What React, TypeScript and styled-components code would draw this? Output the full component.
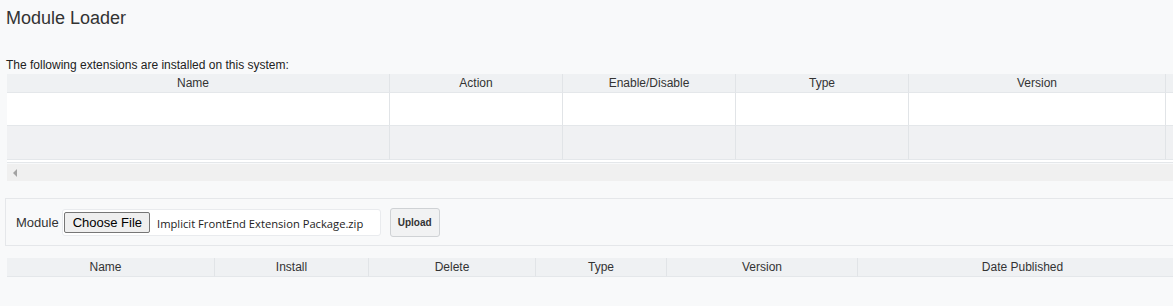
import React from "react";
import styled, { createGlobalStyle } from "styled-components";

const GlobalStyle = createGlobalStyle`
  html, body {
    margin: 0;
    padding: 0;
    background: #f8f9fa;
    overflow: hidden;
  }
  body {
    font-family: "Liberation Sans", Arial, sans-serif;
    color: #333;
  }
`;

const Page = styled.div`
  width: 1173px;
  height: 306px;
  overflow: hidden;
  padding: 0 0 0 5px;
  box-sizing: border-box;
`;

const Title = styled.h1`
  margin: 0;
  padding: 8px 0 0 1px;
  font-size: 18px;
  font-weight: normal;
  line-height: 20px;
  color: #333;
`;

const Caption = styled.p`
  margin: 0;
  padding: 30px 0 0 1px;
  font-size: 12px;
  line-height: 14px;
  color: #222;
`;

const Scroller = styled.div`
  margin: 2px 0 0 2px;
  width: 1180px;
  overflow: hidden;
`;

const Grid = styled.div<{ $cols: string }>`
  display: grid;
  grid-template-columns: ${(p) => p.$cols};
`;

const HeadCell = styled.div<{ $first?: boolean }>`
  height: 19px;
  line-height: 19px;
  font-size: 12px;
  text-align: center;
  background: #eff1f3;
  color: #333;
  padding-right: ${(p) => (p.$first ? "10px" : "0")};
  border-left: ${(p) => (p.$first ? "none" : "1px solid #e1e4e7")};
  border-bottom: 1px solid #e4e7ea;
  box-sizing: border-box;
`;

const BodyCell = styled.div<{ $odd?: boolean; $first?: boolean }>`
  height: ${(p) => (p.$odd ? "34px" : "33px")};
  background: ${(p) => (p.$odd ? "#f0f1f3" : "#ffffff")};
  border-left: ${(p) => (p.$first ? "none" : "1px solid #e1e4e7")};
  border-bottom: 1px solid #e4e7ea;
  box-sizing: border-box;
`;

const TableEnd = styled.div`
  height: 2px;
  border-bottom: 1px solid #e4e7ea;
  background: #ffffff;
`;

const ScrollTrack = styled.div`
  height: 17px;
  margin-top: 1px;
  background: #f0f0f0;
  display: flex;
  align-items: center;
  padding-left: 6px;
`;

const Arrow = styled.span`
  width: 0;
  height: 0;
  border-top: 4px solid transparent;
  border-bottom: 4px solid transparent;
  border-right: 4px solid #a3a3a3;
`;

const UploadPanel = styled.form`
  margin-top: 17px;
  width: 1180px;
  height: 48px;
  border: 1px solid #e5e7ea;
  box-sizing: border-box;
  display: flex;
  align-items: center;
  padding-left: 10px;
`;

const Label = styled.span`
  font-size: 13px;
  color: #333;
  margin-right: 3px;
`;

const FileBox = styled.div`
  width: 319px;
  height: 27px;
  background: #fff;
  border: 1px solid #e9ebee;
  border-radius: 3px;
  box-sizing: border-box;
  display: flex;
  align-items: center;
  padding-left: 1px;
`;

const ChooseButton = styled.span`
  height: 21px;
  padding: 0 7px 0 8px;
  box-sizing: border-box;
  border: 1px solid #767676;
  border-radius: 2px;
  background: #efefef;
  font-size: 13px;
  line-height: 19px;
  color: #000;
`;

const FileName = styled.span`
  margin-left: 7px;
  font-family: "Open Sans", sans-serif;
  font-size: 11.2px;
  color: #222;
  padding-top: 3px;
  white-space: nowrap;
`;

const UploadButton = styled.button`
  margin-left: 9px;
  width: 50px;
  height: 29px;
  border: 1px solid #cfd2d5;
  border-radius: 3px;
  background: #f1f2f3;
  font-family: "Liberation Sans", Arial, sans-serif;
  font-size: 10px;
  font-weight: bold;
  color: #333;
  padding: 0;
`;

const LowerTable = styled.div`
  margin: 12px 0 0 2px;
  width: 1180px;
`;

const upperCols = "382px 173px 173px 173px 257px 22px";
const upperHeads = ["Name", "Action", "Enable/Disable", "Type", "Version", ""];
const lowerCols = "207px 154px 167px 131px 191px 330px";
const lowerHeads = ["Name", "Install", "Delete", "Type", "Version", "Date Published"];

export default function App() {
  return (
    <Page>
      <GlobalStyle />
      <Title>Module Loader</Title>
      <Caption>The following extensions are installed on this system:</Caption>
      <Scroller>
        <Grid $cols={upperCols}>
          {upperHeads.map((h, i) => (
            <HeadCell key={"h" + i} $first={i === 0}>
              {h}
            </HeadCell>
          ))}
          {[0, 1].map((r) =>
            upperHeads.map((_, i) => (
              <BodyCell key={r + "-" + i} $odd={r === 1} $first={i === 0} />
            ))
          )}
        </Grid>
        <TableEnd />
        <ScrollTrack>
          <Arrow />
        </ScrollTrack>
      </Scroller>
      <UploadPanel onSubmit={(e) => e.preventDefault()}>
        <Label>Module</Label>
        <FileBox>
          <ChooseButton>Choose File</ChooseButton>
          <FileName>Implicit FrontEnd Extension Package.zip</FileName>
        </FileBox>
        <UploadButton type="button">Upload</UploadButton>
      </UploadPanel>
      <LowerTable>
        <Grid $cols={lowerCols}>
          {lowerHeads.map((h, i) => (
            <HeadCell key={h} $first={i === 0}>
              {h}
            </HeadCell>
          ))}
        </Grid>
      </LowerTable>
    </Page>
  );
}
